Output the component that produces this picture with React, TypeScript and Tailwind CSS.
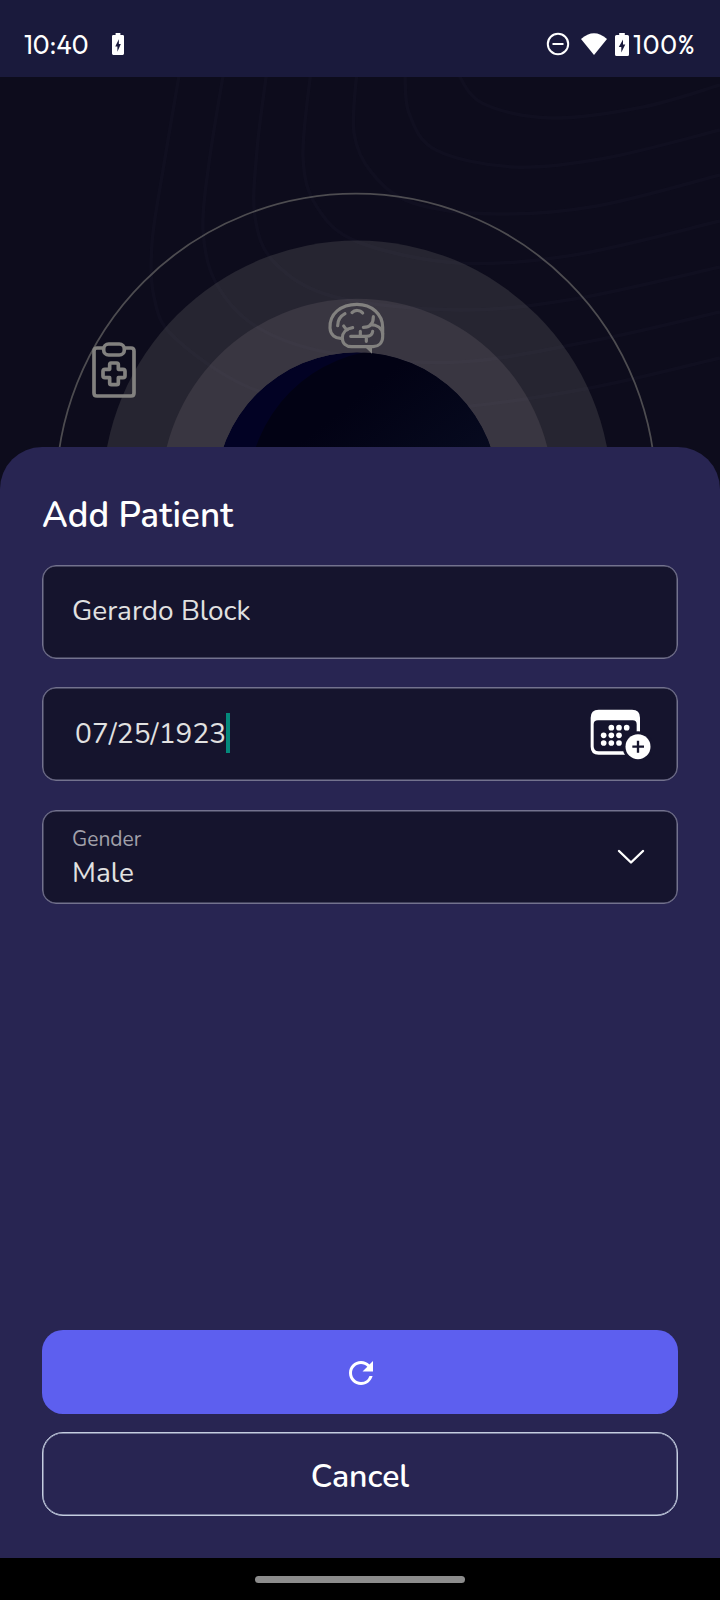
import type { ReactNode } from "react";
import { MdRefresh } from "react-icons/md";

type Point = [number, number];

const contours: Point[][] = [
  [[180, 70], [163, 170], [152, 243], [154, 297], [174, 337], [248, 387], [340, 408], [459, 407], [590, 388], [720, 358]],
  [[224, 70], [209, 163], [203, 230], [216, 283], [257, 327], [331, 353], [459, 362], [597, 340], [720, 312]],
  [[267, 70], [257, 150], [255, 217], [275, 263], [335, 297], [459, 310], [574, 299], [720, 267]],
  [[311, 70], [303, 157], [317, 207], [358, 242], [459, 263], [574, 255], [720, 221]],
  [[357, 70], [354, 133], [372, 173], [413, 203], [496, 214], [597, 206], [720, 175]],
  [[405, 70], [409, 113], [436, 150], [514, 167], [606, 158], [720, 130]],
  [[456, 70], [482, 103], [551, 118], [643, 107], [720, 85]],
];

function smooth(points: Point[]) {
  let d = `M${points[0][0]} ${points[0][1]}`;
  for (let i = 0; i < points.length - 1; i++) {
    const p0 = points[Math.max(i - 1, 0)];
    const p1 = points[i];
    const p2 = points[i + 1];
    const p3 = points[Math.min(i + 2, points.length - 1)];
    d += `C${p1[0] + (p2[0] - p0[0]) / 6} ${p1[1] + (p2[1] - p0[1]) / 6} ${p2[0] - (p3[0] - p1[0]) / 6} ${p2[1] - (p3[1] - p1[1]) / 6} ${p2[0]} ${p2[1]}`;
  }
  return d;
}

function HeroArt() {
  return (
    <svg width="720" height="440" viewBox="0 77 720 440" className="block" fill="none">
      <defs>
        <clipPath id="core">
          <circle cx="357" cy="494" r="141.7" />
        </clipPath>
        <linearGradient id="night" x1="320" y1="370" x2="430" y2="510" gradientUnits="userSpaceOnUse">
          <stop offset="0.25" stopColor="#020214" />
          <stop offset="1" stopColor="#070b20" />
        </linearGradient>
      </defs>
      <circle cx="356" cy="493.7" r="300" stroke="#4d4c50" strokeWidth="1.8" />
      <circle cx="357" cy="495" r="254.5" fill="#262531" />
      <circle cx="357" cy="495" r="196.3" fill="#393641" />
      <g stroke="#8290a8" strokeOpacity="0.028" strokeWidth="3.5">
        {contours.map((line, i) => (
          <path key={i} d={smooth(line)} />
        ))}
      </g>
      <g clipPath="url(#core)">
        <circle cx="357" cy="494" r="141.7" fill="#020224" />
        <circle cx="392.5" cy="494" r="144.5" fill="url(#night)" />
      </g>
      <g transform="translate(80 330) scale(0.33333)" stroke="#82817f" strokeWidth="11" strokeLinejoin="round">
        <path d="M70 54H51q-9 0-9 9v126q0 9 9 9h102q9 0 9-9V63q0-9-9-9h-19" />
        <rect x="71" y="42" width="62" height="33" rx="15" />
        <path d="M93 99h17q5 0 5 5v14h14q6 0 6 6v13q0 6-6 6h-14v16q0 5-5 5H94q-5 0-5-5v-16H75q-6 0-6-6v-13q0-6 6-6h14v-14q0-5 4-5Z" />
      </g>
      <g transform="translate(310 290) scale(0.33333)" stroke="#82817f" strokeWidth="9.5" strokeLinecap="round" strokeLinejoin="round">
        <path d="M97 145C76 147 61 135 60 114C58 72 92 43 141 43C186 43 218 73 218 112V140C218 158 206 169 189 170H125C108 170 97 160 97 144C97 129 108 116 128 113" />
        <path d="M83 107c0-17 9-29 22-36M126 68c8-9 24-9 32 1M101 108c3 5 6 9 11 11M160 112c20 0 30-9 30-32M181 104c19 0 35 9 37 28M122 139h47c11 0 18-5 19-15M151 124v13M169 141v13" />
        <path d="M164 170h22v21Z" fill="#82817f" stroke="none" />
      </g>
    </svg>
  );
}

function BatteryIcon({ className }: { className: string }) {
  return (
    <svg viewBox="0 0 14 23" preserveAspectRatio="none" className={className}>
      <path
        fill="#fff"
        fillRule="evenodd"
        d="M4.2 0H9.8V2H12.5Q14 2 14 3.5V21.5Q14 23 12.5 23H1.5Q0 23 0 21.5V3.5Q0 2 1.5 2H4.2ZM8 6.5L3.8 14H6.3V19.5L10.3 11.5H8Z"
      />
    </svg>
  );
}

function CalendarAddIcon() {
  const dots: Point[] = [
    [154, 144], [177, 144], [200, 144],
    [131, 167], [154, 167], [177, 167],
    [131, 190], [154, 190], [177, 190],
  ];
  return (
    <svg width="62" height="52" viewBox="90 88 186 156">
      <path
        fill="#fff"
        fillRule="evenodd"
        d="M116 90H216Q240 90 240 114V202Q240 225 216 225H116Q92 225 92 201V114Q92 90 116 90ZM114 122Q101 122 101 134V200Q101 215 116 215H216Q230 215 230 200V134Q230 122 218 122Z"
      />
      {dots.map(([x, y]) => (
        <circle key={`${x}-${y}`} cx={x} cy={y} r="8.5" fill="#fff" />
      ))}
      <circle cx="234" cy="201" r="46" fill="#15142d" />
      <circle cx="234" cy="201" r="37.5" fill="#fff" />
      <path d="M217 201h35M234 183v36" stroke="#15142d" strokeWidth="7" />
    </svg>
  );
}

function Field({ children }: { children: ReactNode }) {
  return (
    <div className="flex h-[94px] items-center rounded-[14px] border border-[#73728e] bg-[#15142d] shadow-[inset_0_0_0_0.5px_#73728e]">
      {children}
    </div>
  );
}

function StatusBar() {
  return (
    <header className="flex h-[77px] shrink-0 items-center bg-[#1a1a3c] pt-[11px] pr-[25px] pl-[24px] font-['Outfit','Lato',sans-serif] text-[25.5px] leading-8 text-white">
      <span className="w-[88px] pt-[1px]">10:40</span>
      <BatteryIcon className="h-[22px] w-[12px]" />
      <div className="ml-auto flex items-center">
        <svg width="24" height="24" viewBox="0 0 24 24" fill="none" stroke="#fff" strokeWidth="2">
          <circle cx="12" cy="12" r="10.2" />
          <path d="M6.5 12h11" />
        </svg>
        <svg width="26" height="22" viewBox="0 0 26 22" className="ml-[11px]">
          <path d="M0 6Q13-5.5 26 6L13 22Z" fill="#fff" />
        </svg>
        <BatteryIcon className="ml-[8px] h-[23px] w-[14px]" />
        <span className="ml-[4px] w-[62px] pt-[1px] tracking-[0.8px] whitespace-nowrap">100%</span>
      </div>
    </header>
  );
}

export default function App() {
  return (
    <div className="flex h-[1600px] w-[720px] flex-col overflow-hidden bg-[#0d0c1c] font-['Nunito','Noto_Sans',sans-serif]">
      <StatusBar />
      <div className="h-[370px] shrink-0">
        <HeroArt />
      </div>
      <main className="relative flex h-[1111px] shrink-0 flex-col rounded-t-[42px] bg-[#282552] px-[42px] pt-[42px] pb-[42px]">
        <h1 className="h-[75.5px] text-[35px] leading-[54px] font-semibold tracking-[0.1px] text-white">Add Patient</h1>
        <div className="flex flex-col gap-[28.5px] text-[28px] text-[#e1e1e1]">
          <Field>
            <span className="ml-[29px] pb-[1px]">Gerardo Block</span>
          </Field>
          <Field>
            <span className="ml-[32px] tracking-[0.1px]">07/25/1923</span>
            <span className="mb-[2px] h-10 w-1 bg-[#04897b]" />
            <span className="mr-[25px] ml-auto pt-[1px]">
              <CalendarAddIcon />
            </span>
          </Field>
          <Field>
            <div className="ml-[29px] flex flex-col pt-[2px]">
              <span className="text-[21px] leading-[30px] text-[#a1a0aa]">Gender</span>
              <span className="leading-[38px]">Male</span>
            </div>
            <svg width="28" height="16" viewBox="0 0 28 16" className="mt-[1px] mr-[32.5px] ml-auto" fill="none">
              <path d="M2 2l12 11.5L26 2" stroke="#fff" strokeWidth="2.4" strokeLinecap="round" strokeLinejoin="round" />
            </svg>
          </Field>
        </div>
        <div className="mt-auto flex flex-col gap-[18px]">
          <button className="flex h-[84px] items-center justify-center rounded-[21px] bg-[#5d5fef] pt-[1px] pl-[2px] text-white">
            <MdRefresh className="size-9" />
          </button>
          <button className="h-[84px] rounded-[21px] border border-[#c4cde0] pt-[5px] text-[32px] font-semibold text-white shadow-[inset_0_0_0_0.5px_#c4cde0]">
            Cancel
          </button>
        </div>
      </main>
      <footer className="flex h-[42px] items-center justify-center bg-black">
        <div className="h-[7px] w-[210px] rounded-full bg-[#8c8c8c]" />
      </footer>
    </div>
  );
}
